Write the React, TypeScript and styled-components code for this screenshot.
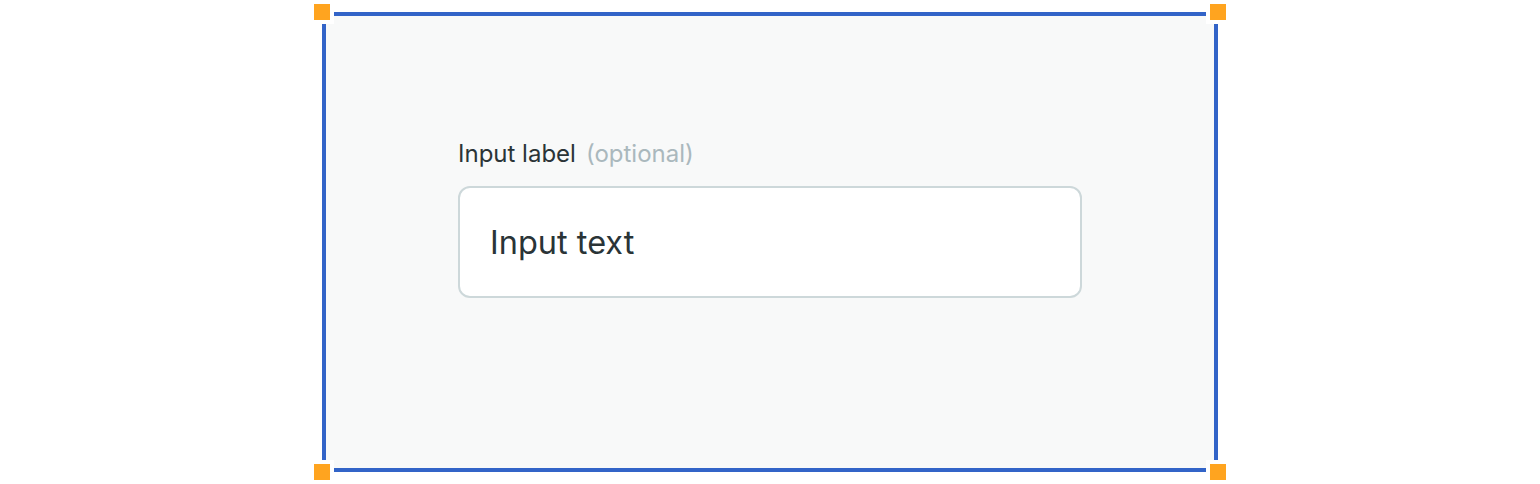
import React from "react";
import styled, { createGlobalStyle } from "styled-components";

const Global = createGlobalStyle`
  html, body { margin: 0; padding: 0; background: #ffffff; }
  body { font-family: Inter, "Noto Sans", sans-serif; }
`;

const Page = styled.div`
  width: 1540px;
  height: 484px;
  display: flex;
  justify-content: center;
  padding-top: 12px;
  box-sizing: border-box;
`;

const Frame = styled.div`
  position: relative;
  width: 896px;
  height: 460px;
  box-sizing: border-box;
  border: 4px solid #3264c8;
  background: #f8f9f9;
  display: flex;
  flex-direction: column;
  padding: 124px 0 0 132px;
`;

const Handle = styled.span<{ $x: "left" | "right"; $y: "top" | "bottom" }>`
  position: absolute;
  width: 16px;
  height: 16px;
  background: #ffa41f;
  border: 4px solid #ffffff;
  ${(p) => (p.$x === "left" ? "left: -16px;" : "right: -16px;")}
  ${(p) => (p.$y === "top" ? "top: -16px;" : "bottom: -16px;")}
`;

const Field = styled.div`
  display: flex;
  flex-direction: column;
  gap: 18px;
  width: 624px;
`;

const Label = styled.label`
  display: flex;
  align-items: baseline;
  gap: 10px;
  font-size: 24px;
  line-height: 28px;
  color: #2a3437;
`;

const Optional = styled.span`
  color: #aab8bd;
`;

const InputBox = styled.div`
  box-sizing: border-box;
  height: 112px;
  border: 2px solid #cdd8da;
  border-radius: 12px;
  background: #ffffff;
  display: flex;
  align-items: center;
  padding: 0 30px;
  font-size: 32.5px;
  color: #2a3437;
`;

export default function App() {
  return (
    <>
      <Global />
      <Page>
        <Frame>
          <Handle $x="left" $y="top" />
          <Handle $x="right" $y="top" />
          <Handle $x="left" $y="bottom" />
          <Handle $x="right" $y="bottom" />
          <Field>
            <Label>
              Input label <Optional>(optional)</Optional>
            </Label>
            <InputBox>Input text</InputBox>
          </Field>
        </Frame>
      </Page>
    </>
  );
}
